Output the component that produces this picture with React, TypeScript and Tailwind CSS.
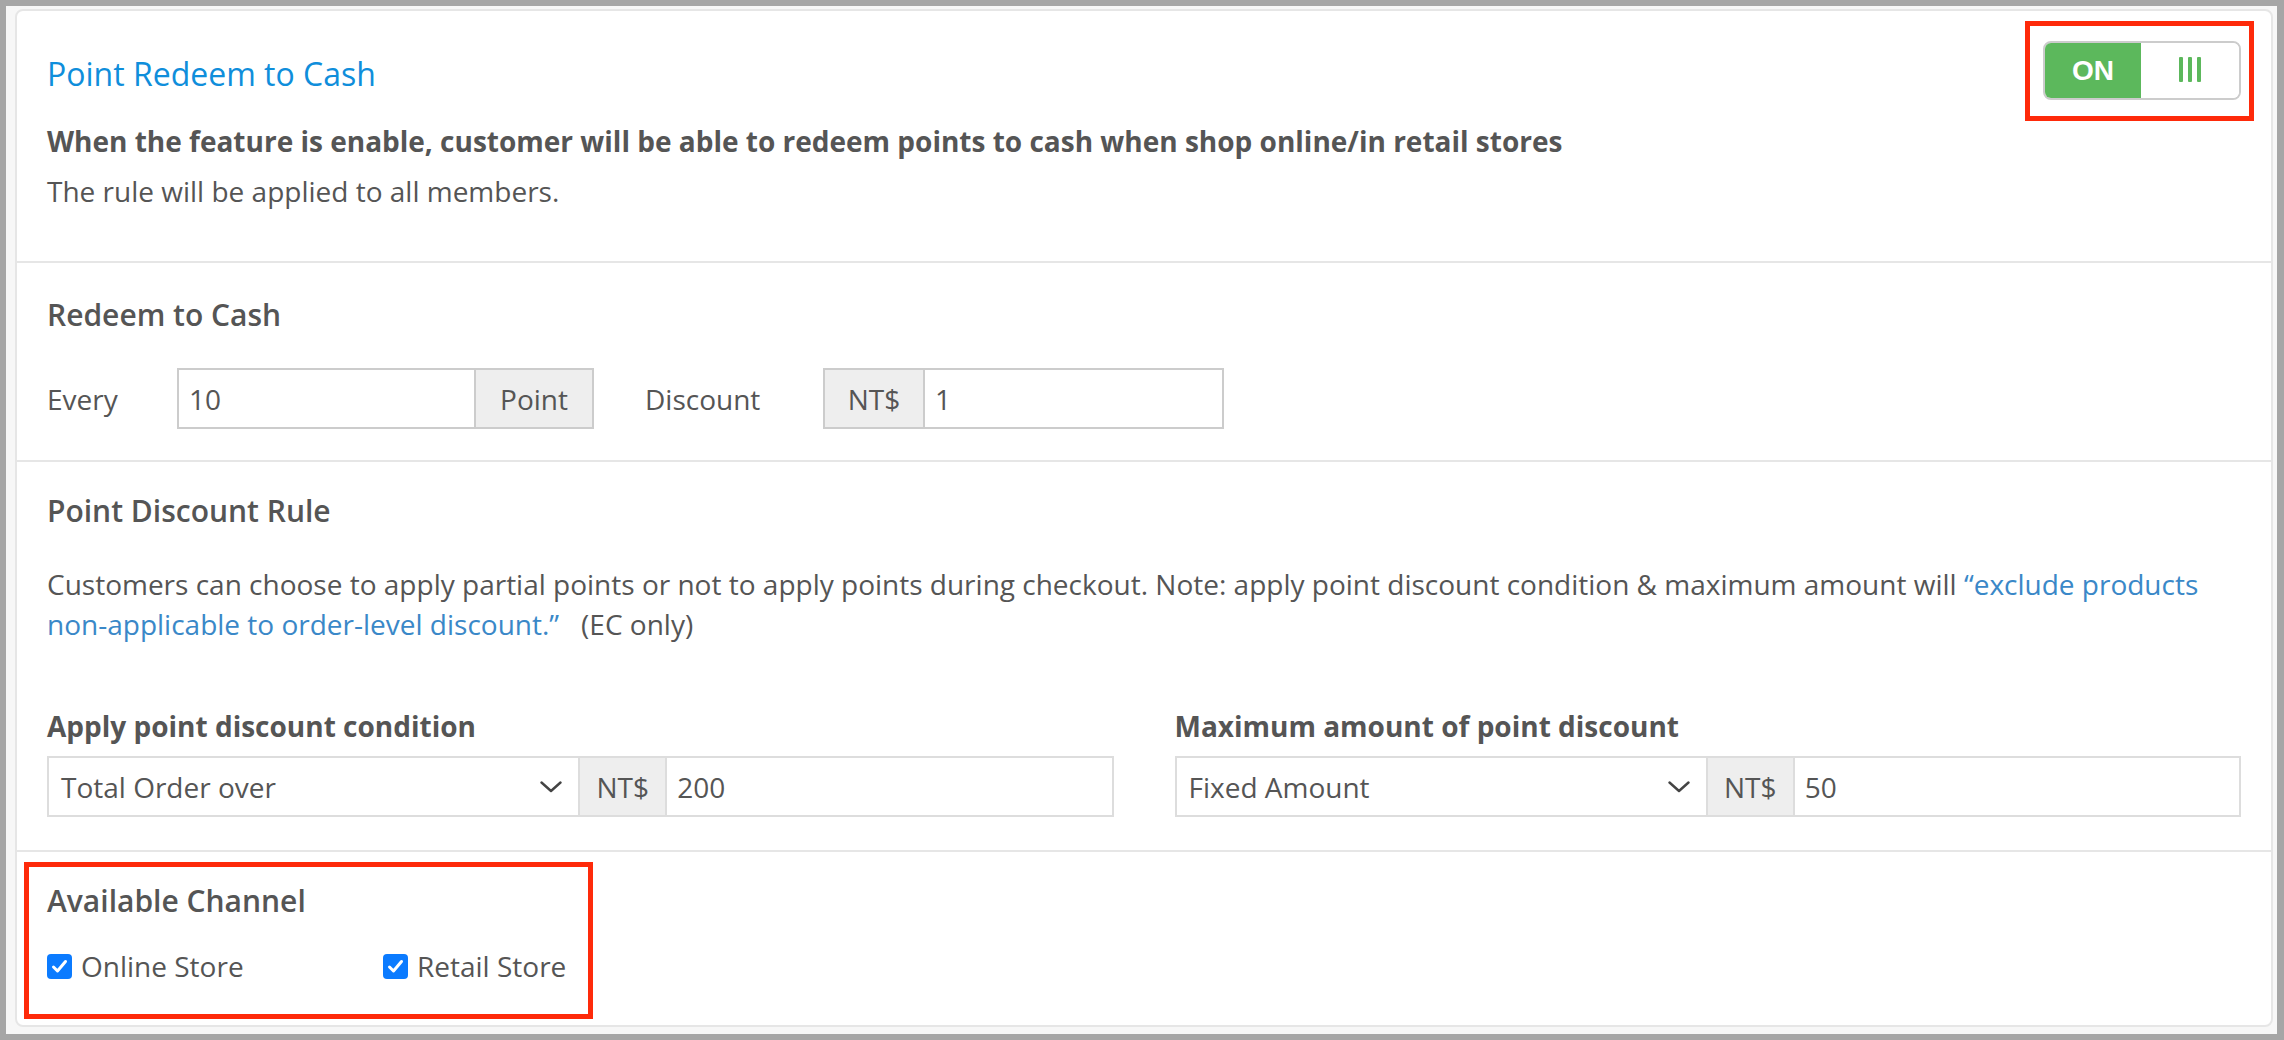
import React from 'react';

function Chevron() {
  return (
    <svg width="22" height="12" viewBox="0 0 22 12" fill="none">
      <path d="M1.5 1.5 L11 10 L20.5 1.5" stroke="#444" strokeWidth="2.4" strokeLinecap="round" strokeLinejoin="round" />
    </svg>
  );
}

function Checkbox({ label, className }: { label: string; className?: string }) {
  return (
    <label className={`flex items-center gap-[9px] ${className ?? ''}`}>
      <span className="flex h-[25px] w-[25px] items-center justify-center rounded-[4px] bg-[#0b7bff]">
        <svg width="17" height="15" viewBox="0 0 17 15" fill="none">
          <path d="M2.5 8 L6.5 12 L14.5 2.5" stroke="#fff" strokeWidth="3" strokeLinecap="round" strokeLinejoin="round" />
        </svg>
      </span>
      <span>{label}</span>
    </label>
  );
}

function ConditionGroup({ title, option, value }: { title: string; option: string; value: string }) {
  return (
    <div>
      <p className="font-bold">{title}</p>
      <div className="mt-[10px] flex h-[61px]">
        <div className="flex w-1/2 items-center justify-between border-2 border-[#ddd] bg-white pl-[12px] pr-[16px]">
          <span>{option}</span>
          <Chevron />
        </div>
        <div className="flex w-[87px] items-center justify-center border-2 border-l-0 border-[#ddd] bg-[#eee]">NT$</div>
        <input
          readOnly
          value={value}
          className="min-w-0 flex-1 border-2 border-l-0 border-[#ddd] bg-white px-[10px] text-[#555] outline-none"
        />
      </div>
    </div>
  );
}

export default function App() {
  return (
    <div className="h-[1040px] w-full bg-[#a6a6a6] pb-[6px] pl-[6px] pr-[7px] pt-[6px] font-['Open_Sans',sans-serif] text-[28px] leading-[40px] text-[#555]">
      <div className="h-full bg-[#f7f7f7] pb-[7px] pl-[9px] pr-[4px] pt-[3px]">
        <div className="h-full overflow-hidden rounded-[8px] border-2 border-[#e6e6e6] bg-white">
          {/* header */}
          <div className="border-b-2 border-[#e6e6e6] pb-[50px] pl-[30px] pr-[17px] pt-[10px]">
            <div className="flex items-start justify-between">
              <h1 className="mt-[32px] text-[32px] leading-[42px] text-[#0f8edb]">Point Redeem to Cash</h1>
              <div className="border-[5px] border-[#fe2a0a] pb-[16px] pl-[13px] pr-[8px] pt-[15px]">
                <div className="flex h-[59px] w-[198px] overflow-hidden rounded-[8px] border-2 border-[#ccc]">
                  <div className="flex w-[96px] items-center justify-center bg-[#5cb85c] font-['Liberation_Sans',sans-serif] text-[28px] font-bold text-white">
                    ON
                  </div>
                  <div className="flex flex-1 items-center justify-center gap-[5px] bg-white pb-[3px]">
                    <span className="h-[25px] w-[4px] rounded-[1px] bg-[#5cb85c]" />
                    <span className="h-[25px] w-[4px] rounded-[1px] bg-[#5cb85c]" />
                    <span className="h-[25px] w-[4px] rounded-[1px] bg-[#5cb85c]" />
                  </div>
                </div>
              </div>
            </div>
            <p className="font-bold">
              When the feature is enable, customer will be able to redeem points to cash when shop online/in retail stores
            </p>
            <p className="mt-[10px]">The rule will be applied to all members.</p>
          </div>

          {/* redeem to cash */}
          <div className="border-b-2 border-[#e6e6e6] px-[30px] pb-[31px] pt-[32px]">
            <h2 className="text-[30px] font-semibold">Redeem to Cash</h2>
            <div className="mt-[33px] flex h-[61px] items-center">
              <span className="w-[130px]">Every</span>
              <div className="flex h-full w-[417px]">
                <input
                  readOnly
                  value="10"
                  className="min-w-0 flex-1 border-2 border-[#ccc] bg-white px-[10px] text-[#555] outline-none"
                />
                <div className="flex w-[118px] items-center justify-center border-2 border-l-0 border-[#ccc] bg-[#eee]">Point</div>
              </div>
              <span className="ml-[51px] w-[178px]">Discount</span>
              <div className="flex h-full w-[401px]">
                <div className="flex w-[102px] items-center justify-center border-2 border-[#ccc] bg-[#eee]">NT$</div>
                <input
                  readOnly
                  value="1"
                  className="min-w-0 flex-1 border-2 border-l-0 border-[#ccc] bg-white px-[10px] text-[#555] outline-none"
                />
              </div>
            </div>
          </div>

          {/* point discount rule */}
          <div className="border-b-2 border-[#e6e6e6] px-[30px] pb-[33px] pt-[29px]">
            <h2 className="text-[30px] font-semibold">Point Discount Rule</h2>
            <p className="mt-[33px]">
              Customers can choose to apply partial points or not to apply points during checkout. Note: apply point discount
              condition &amp; maximum amount will <span className="text-[#3a88c8]">“exclude products</span>
              <br />
              <span className="text-[#3a88c8]">non-applicable to order-level discount.”</span>
              <span className="ml-[22px]">(EC only)</span>
            </p>
            <div className="mt-[62px] grid grid-cols-2 gap-x-[61px]">
              <ConditionGroup title="Apply point discount condition" option="Total Order over" value="200" />
              <ConditionGroup title="Maximum amount of point discount" option="Fixed Amount" value="50" />
            </div>
          </div>

          {/* available channel */}
          <div className="pl-[7px] pt-[10px]">
            <div className="w-[569px] border-[5px] border-[#fe2a0a] pb-[28px] pl-[18px] pt-[14px]">
              <h2 className="text-[30px] font-semibold">Available Channel</h2>
              <div className="mt-[25px] flex items-center">
                <Checkbox label="Online Store" className="w-[336px]" />
                <Checkbox label="Retail Store" />
              </div>
            </div>
          </div>
        </div>
      </div>
    </div>
  );
}
